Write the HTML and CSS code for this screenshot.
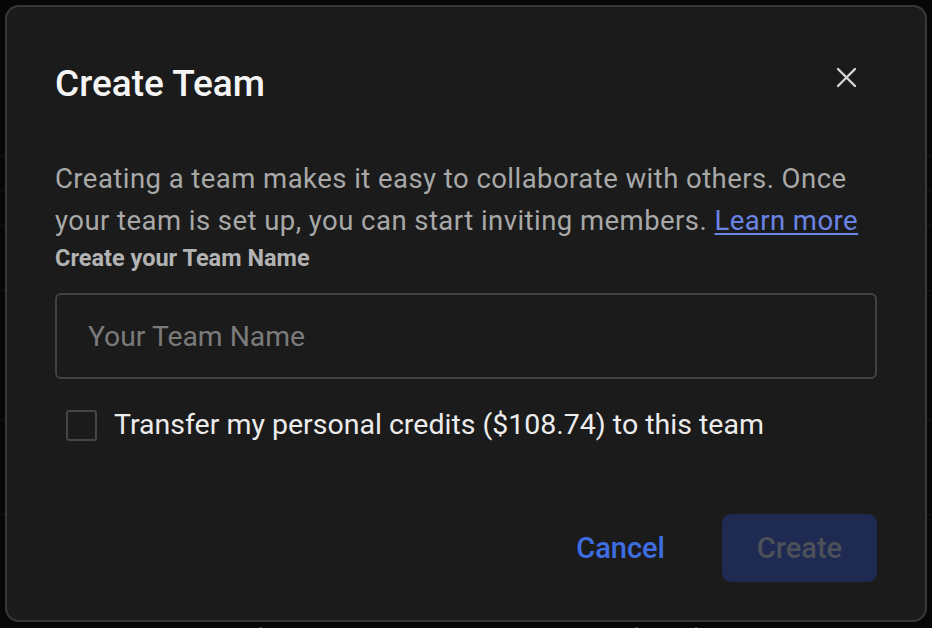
FILE: index.html
```html
<!DOCTYPE html>
<html lang="en">

<head>
    <meta charset="UTF-8">
    <meta name="viewport" content="width=device-width, initial-scale=1.0">
    <title>Create Team</title>
    <link rel="stylesheet" href="styles.css">
</head>

<body>
    <!-- page underneath the modal -->
    <div class="page">
        <div class="row"></div>
        <div class="row"></div>
        <div class="row tall"></div>
        <div class="row big"></div>
        <div class="row mid"></div>
        <div class="row foot">
            <span class="foot-left">Personal Credits</span>
            <span class="foot-right">Send credit to michael@vast.ai</span>
        </div>
    </div>

    <div class="backdrop">
        <div class="dialog">
            <div class="dialog-head">
                <h2 class="dialog-title">Create Team</h2>
                <button class="close" aria-label="close">
                    <svg width="21" height="21" viewBox="0 0 21 21">
                        <path d="M2 2 L19 19 M19 2 L2 19" stroke="#d6d6d6" stroke-width="2.4" stroke-linecap="round" fill="none" />
                    </svg>
                </button>
            </div>

            <p class="intro">
                Creating a team makes it easy to collaborate with others. Once your team is set up, you can start inviting members.
                <a href="#" class="link">Learn more</a>
            </p>

            <label class="field-label" for="team">Create your Team Name</label>
            <input id="team" class="field" placeholder="Your Team Name">

            <label class="check-row">
                <span class="check"></span>
                <span class="check-text">Transfer my personal credits ($108.74) to this team</span>
            </label>

            <div class="actions">
                <button class="btn-text">Cancel</button>
                <button class="btn-create" disabled>Create</button>
            </div>
        </div>
    </div>
</body>

</html>
```

FILE: styles.css
```css
* {
    box-sizing: border-box;
}

html,
body {
    margin: 0;
    height: 100%;
    background: #0d0d0d;
    font-family: Roboto, "Liberation Sans", sans-serif;
    overflow: hidden;
}

.page {
    display: flex;
    flex-direction: column;
    padding-top: 155px;
}

.row {
    height: 35px;
    border-top: 1px solid #262626;
}

.row.tall {
    height: 65px;
}

.row.big {
    height: 130px;
}

.row.mid {
    height: 95px;
    border-bottom: 1px solid #262626;
}

.foot {
    height: auto;
    border-top: none;
    margin-top: 108px;
    display: flex;
    font-size: 27px;
    color: #8a8a8a;
}

.foot-left {
    margin-left: 158px;
}

.foot-right {
    margin-left: 233px;
}

.backdrop {
    position: fixed;
    inset: 0;
    background: rgba(0, 0, 0, 0.45);
}

.dialog {
    position: absolute;
    left: 5px;
    top: 5px;
    width: 922px;
    height: 617px;
    background: #1b1b1b;
    border: 2px solid #383838;
    border-radius: 14px;
    padding: 53px 48px 0 48px;
    display: flex;
    flex-direction: column;
}

.dialog-head {
    display: flex;
    justify-content: space-between;
    align-items: flex-start;
}

.dialog-title {
    margin: 0;
    font-size: 37px;
    line-height: 48px;
    font-weight: 500;
    color: #f5f5f5;
}

.close {
    background: none;
    border: none;
    padding: 0;
    margin: 7px 20px 0 0;
    width: 21px;
    height: 21px;
    cursor: pointer;
}

.intro {
    margin: 50px 0 0;
    font-size: 27.5px;
    line-height: 42px;
    letter-spacing: 0.45px;
    color: #a8a8a8;
}

.link {
    color: #6a84e6;
    text-decoration: underline;
    text-underline-offset: 3px;
}

.field-label {
    margin-top: 4px;
    font-size: 23.5px;
    line-height: 24px;
    font-weight: 700;
    color: #b3b3b3;
}

.field {
    margin-top: 23px;
    height: 86px;
    background: transparent;
    border: 2px solid #424242;
    border-radius: 6px;
    padding: 0 31px;
    font-family: inherit;
    font-size: 28.3px;
    color: #e0e0e0;
    outline: none;
}

.field::placeholder {
    color: #7b7b7b;
}

.check-row {
    margin-top: 29px;
    display: flex;
    align-items: center;
    gap: 17px;
    padding-left: 11px;
}

.check {
    flex: none;
    width: 31px;
    height: 31px;
    border: 2px solid #464646;
    border-radius: 3px;
}

.check-text {
    font-size: 28.5px;
    line-height: 34px;
    color: #ececec;
}

.actions {
    margin-top: auto;
    margin-bottom: 38px;
    display: flex;
    justify-content: flex-end;
    align-items: center;
    gap: 57px;
}

.btn-text {
    background: none;
    border: none;
    padding: 0;
    font-family: inherit;
    font-size: 29px;
    font-weight: 500;
    color: #3e6de2;
    cursor: pointer;
}

.btn-create {
    width: 155px;
    height: 68px;
    background: #1e2a52;
    border: none;
    border-radius: 9px;
    font-family: inherit;
    font-size: 29px;
    font-weight: 500;
    color: #4c5058;
}
```
